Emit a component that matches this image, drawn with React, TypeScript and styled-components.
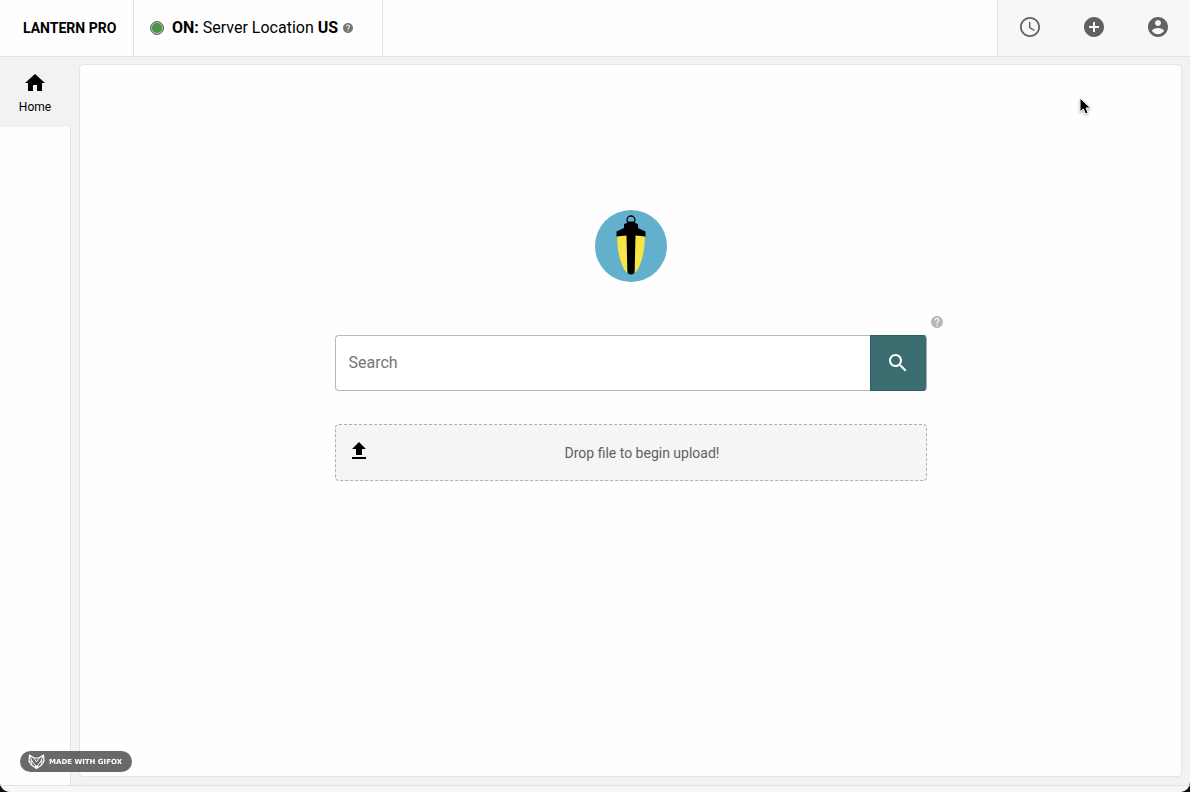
import React from "react";
import styled, { createGlobalStyle } from "styled-components";

const GlobalStyle = createGlobalStyle`
  *, *::before, *::after { box-sizing: border-box; }
  html { background: #101010; }
  body {
    margin: 0;
    color: #000;
    font-family: Roboto, "Liberation Sans", sans-serif;
    font-size: 16px;
    line-height: 24px;
  }
  button, input { font: inherit; color: inherit; }
  button { cursor: pointer; }
`;

const Window = styled.div`
  display: flex;
  flex-direction: column;
  min-height: 100vh;
  overflow: hidden;
  background: #f2f2f2;
  border-radius: 0 0 10px 10px;
`;

const Header = styled.header`
  display: flex;
  height: 57px;
  background: #fefefe;
  border-bottom: 1px solid #e2e2e2;
`;

const Brand = styled.h1`
  display: flex;
  align-items: center;
  margin: 0;
  width: 134px;
  padding-left: 23px;
  border-right: 1px solid #e2e2e2;
  font-size: 14px;
  font-weight: 700;
  white-space: nowrap;
`;

const Status = styled.div`
  display: flex;
  align-items: center;
  width: 249px;
  padding: 0 0 1px 16px;
  border-right: 1px solid #e2e2e2;
  white-space: nowrap;
`;

const StatusDot = styled.span`
  width: 14px;
  height: 14px;
  margin-right: 8px;
  border: 1px solid #6c6c70;
  border-radius: 50%;
  background: #4f9346;
  box-shadow: inset 0 0 0 1px #a9c4a6;
`;

const StatusText = styled.span`
  margin-right: 5px;
`;

const HelpButton = styled.button<{ $size: number; $color: string }>`
  display: flex;
  padding: 0;
  border: 0;
  background: none;
  color: ${(p) => p.$color};
  svg {
    width: ${(p) => p.$size}px;
    height: ${(p) => p.$size}px;
  }
`;

const Actions = styled.nav`
  display: flex;
  margin-left: auto;
  background: #f7f7f7;
  border-left: 1px solid #e2e2e2;
`;

const ActionButton = styled.button`
  display: flex;
  align-items: center;
  justify-content: center;
  width: 64px;
  padding: 0 0 2px;
  border: 0;
  background: none;
  color: #616161;
`;

const Body = styled.div`
  display: flex;
  flex: 1;
`;

const Sidebar = styled.nav`
  width: 71px;
  background: #fefefe;
  border-right: 1px solid #e4e4e4;
`;

const SideLink = styled.a`
  display: flex;
  flex-direction: column;
  align-items: center;
  height: 70px;
  padding-top: 14px;
  margin-right: -1px;
  padding-right: 1px;
  background: #f2f2f2;
  color: #000;
  font-size: 12px;
  line-height: 24px;
  text-decoration: none;
`;

const Panel = styled.main`
  display: flex;
  flex: 1;
  flex-direction: column;
  align-items: center;
  margin: 7px 8px 8px;
  padding: 145px 24px 24px;
  background: #fefefe;
  border: 1px solid #e4e4e4;
  border-radius: 4px;
`;

const Content = styled.div`
  width: 100%;
  max-width: 624px;
  padding-top: 34px;
`;

const HelpRow = styled.div`
  display: flex;
  justify-content: flex-end;
  height: 19px;
`;

const SearchForm = styled.form`
  display: flex;
  height: 56px;
  margin: 0 16px 33px;
`;

const SearchInput = styled.input`
  flex: 1;
  min-width: 0;
  padding: 0 13px;
  border: 1px solid #b8b8b8;
  border-right: 0;
  border-radius: 4px 0 0 4px;
  background: #fff;
  outline: 0;
  &::placeholder { color: #757575; opacity: 1; }
`;

const SearchButton = styled.button`
  display: flex;
  align-items: center;
  justify-content: center;
  width: 57px;
  padding: 0;
  border: 1px solid #2f5e62;
  border-right-color: #9fb0b2;
  border-radius: 0 4px 4px 0;
  background: #3b6c70;
  color: #fff;
`;

const DropZone = styled.button`
  display: flex;
  align-items: center;
  width: calc(100% - 32px);
  height: 57px;
  margin: 0 16px;
  padding: 0 12px 0 11px;
  border: 1px dashed #b0b0b0;
  border-radius: 4px;
  background: #f5f5f5;
  svg { margin-bottom: 4px; }
`;

const DropLabel = styled.span`
  flex: 1;
  color: #616161;
  font-size: 14px;
  text-align: center;
`;

const Footer = styled.footer`
  height: 7px;
  background: #f7f7f7;
  border-top: 1px solid #e2e2e2;
`;

const Watermark = styled.div`
  position: fixed;
  bottom: 20px;
  left: 20px;
  display: flex;
  align-items: center;
  gap: 4px;
  height: 21px;
  padding: 0 10px 0 8px;
  border-radius: 11px;
  background: rgba(80, 80, 80, 0.86);
  color: #fff;
  font-family: "DejaVu Sans", sans-serif;
  font-size: 7px;
  font-weight: 700;
  line-height: 12px;
  white-space: nowrap;
`;

const Pointer = styled.svg`
  position: fixed;
  top: 97px;
  right: 98px;
  pointer-events: none;
  filter: drop-shadow(0 1px 1px rgba(0, 0, 0, 0.35));
`;

const paths = {
  clock:
    "M11.99 2C6.47 2 2 6.48 2 12s4.47 10 9.99 10C17.52 22 22 17.52 22 12S17.52 2 11.99 2zM12 20.2c-4.53 0-8.2-3.67-8.2-8.2S7.47 3.8 12 3.8s8.2 3.67 8.2 8.2-3.67 8.2-8.2 8.2zM12.4 7H11v6l5.1 3.1.8-1.2-4.5-2.7z",
  add: "M12 2C6.48 2 2 6.48 2 12s4.48 10 10 10 10-4.48 10-10S17.52 2 12 2zm5 11h-4v4h-2v-4H7v-2h4V7h2v4h4v2z",
  account:
    "M12 2C6.48 2 2 6.48 2 12s4.48 10 10 10 10-4.48 10-10S17.52 2 12 2zm0 3c1.66 0 3 1.34 3 3s-1.34 3-3 3-3-1.34-3-3 1.34-3 3-3zm0 14.2c-2.5 0-4.71-1.28-6-3.22.03-1.99 4-3.08 6-3.08 1.99 0 5.97 1.09 6 3.08-1.29 1.94-3.5 3.22-6 3.22z",
  home: "M10 20v-6h4v6h5v-8h3L12 3 2 12h3v8z",
  help: "M12 2C6.48 2 2 6.48 2 12s4.48 10 10 10 10-4.48 10-10S17.52 2 12 2zm1 17h-2v-2h2v2zm2.07-7.75l-.9.92C13.45 12.9 13 13.5 13 15h-2v-.5c0-1.1.45-2.1 1.17-2.83l1.24-1.26c.37-.36.59-.86.59-1.41 0-1.1-.9-2-2-2s-2 .9-2 2H8c0-2.21 1.79-4 4-4s4 1.79 4 4c0 .88-.36 1.68-.93 2.25z",
  search:
    "M15.5 14h-.79l-.28-.27C15.41 12.59 16 11.11 16 9.5 16 5.91 13.09 3 9.5 3S3 5.91 3 9.5 5.91 16 9.5 16c1.61 0 3.09-.59 4.23-1.57l.27.28v.79l5 4.99L20.49 19l-4.99-5zm-6 0C7.01 14 5 11.99 5 9.5S7.01 5 9.5 5 14 7.01 14 9.5 11.99 14 9.5 14z",
  upload: "M9 16h6v-6h4l-7-7-7 7h4zm-4 2h14v2H5z",
};

function Icon({ name, tight }: { name: keyof typeof paths; tight?: boolean }) {
  return (
    <svg
      width="24"
      height="24"
      viewBox={tight ? "2 2 20 20" : "0 0 24 24"}
      fill="currentColor"
      aria-hidden="true"
    >
      <path d={paths[name]} />
    </svg>
  );
}

function LanternLogo() {
  return (
    <svg width="72" height="72" viewBox="0 0 72 72" role="img" aria-label="Lantern">
      <circle cx="36" cy="36" r="36" fill="#62b0cb" />
      <circle cx="36" cy="10" r="4" fill="none" stroke="#000" strokeWidth="1.3" />
      <path d="M22.500 25h27c1 12-2 26-7 35-2 4-11 4-13 0-5-9-8-23-7-35z" fill="#f8e545" />
      <path d="M32.500 11.500h7l.5 1.500 3 1v4l7.500 3.500v5l-10-1-.800 35c0 3-1.700 4-3.700 4s-3.700-1-3.700-4l-.800-35-10 1v-5L29 18v-4l3-1z" fill="#000" />
    </svg>
  );
}

function FoxMark() {
  return (
    <svg width="17" height="15" viewBox="0 0 17 15" fill="none" stroke="#fff" strokeLinejoin="round" aria-hidden="true">
      <path d="M1.500 1l4.500 3h5l4.500-3 .5 6.500-2.500 3.500-5 3.500-5-3.500L1 7.500z" strokeWidth="1.2" />
      <path d="M1.500 1l2.500 6 4.500 6L13 7l2.500-6M1 7.500l3-.5M16 7.500L13 7M6 4l2.500 4L11 4M3.500 11L4 7M13.500 11L13 7" strokeWidth=".9" />
      <path d="M7 12h3l-1.500 2z" fill="#fff" />
    </svg>
  );
}

export default function App() {
  return (
    <>
      <GlobalStyle />
      <Window>
        <Header>
          <Brand>LANTERN PRO</Brand>
          <Status>
            <StatusDot />
            <StatusText>
              <b>ON:</b> Server Location <b>US</b>
            </StatusText>
            <HelpButton $size={10} $color="#757575" aria-label="About server location">
              <Icon name="help" tight />
            </HelpButton>
          </Status>
          <Actions aria-label="Account">
            <ActionButton aria-label="Recent">
              <Icon name="clock" />
            </ActionButton>
            <ActionButton aria-label="Add">
              <Icon name="add" />
            </ActionButton>
            <ActionButton aria-label="Profile">
              <Icon name="account" />
            </ActionButton>
          </Actions>
        </Header>
        <Body>
          <Sidebar aria-label="Main">
            <SideLink href="#home">
              <Icon name="home" />
              Home
            </SideLink>
          </Sidebar>
          <Panel>
            <LanternLogo />
            <Content>
              <HelpRow>
                <HelpButton $size={12} $color="#b8b8b8" aria-label="Search help">
                  <Icon name="help" tight />
                </HelpButton>
              </HelpRow>
              <SearchForm role="search" onSubmit={(e) => e.preventDefault()}>
                <SearchInput type="text" placeholder="Search" aria-label="Search" />
                <SearchButton type="submit" aria-label="Submit search">
                  <Icon name="search" />
                </SearchButton>
              </SearchForm>
              <DropZone type="button">
                <Icon name="upload" />
                <DropLabel>Drop file to begin upload!</DropLabel>
              </DropZone>
            </Content>
          </Panel>
        </Body>
        <Footer />
      </Window>
      <Watermark>
        <FoxMark />
        MADE WITH GIFOX
      </Watermark>
      <Pointer width="14" height="20" viewBox="0 0 14 20" aria-hidden="true">
        <path d="M2 1v14l3.300-3 2.200 5 2.600-1.100L8 11h4.500z" fill="#000" stroke="#fff" strokeWidth="1" />
      </Pointer>
    </>
  );
}
